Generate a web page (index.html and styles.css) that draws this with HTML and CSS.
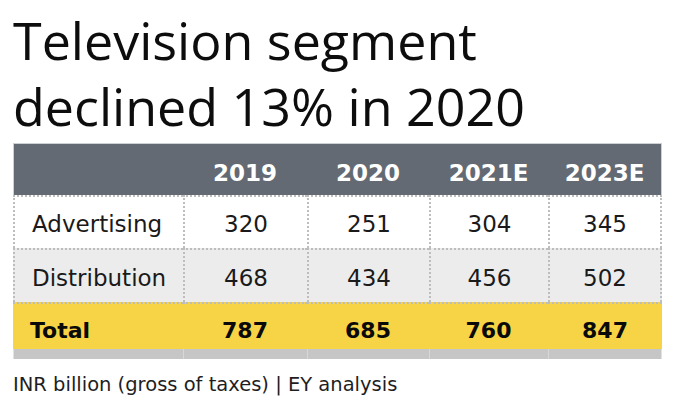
FILE: index.html
```html
<!DOCTYPE html>
<html lang="en">
<head>
<meta charset="utf-8">
<title>Television segment declined 13% in 2020</title>
<link rel="stylesheet" href="styles.css">
</head>
<body>
<div class="chart">
  <h1 class="title">Television segment<br>declined 13% in 2020</h1>
  <table class="data">
    <colgroup>
      <col class="c-label">
      <col class="c-2019">
      <col class="c-2020">
      <col class="c-2021">
      <col class="c-2023">
    </colgroup>
    <thead>
      <tr class="head">
        <th class="first"></th>
        <th>2019</th>
        <th>2020</th>
        <th>2021E</th>
        <th class="last">2023E</th>
      </tr>
    </thead>
    <tbody>
      <tr class="row row-a">
        <td class="label">Advertising</td>
        <td>320</td>
        <td>251</td>
        <td>304</td>
        <td class="last">345</td>
      </tr>
      <tr class="row row-b">
        <td class="label">Distribution</td>
        <td>468</td>
        <td>434</td>
        <td>456</td>
        <td class="last">502</td>
      </tr>
      <tr class="total">
        <td class="label">Total</td>
        <td>787</td>
        <td>685</td>
        <td>760</td>
        <td class="last">847</td>
      </tr>
      <tr class="base">
        <td class="first"></td>
        <td></td>
        <td></td>
        <td></td>
        <td class="last"></td>
      </tr>
    </tbody>
  </table>
  <p class="source">INR billion (gross of taxes) | EY analysis</p>
</div>
</body>
</html>
```
FILE: styles.css
```css
html, body {
  margin: 0;
  padding: 0;
  background: #ffffff;
}

.chart {
  padding: 7px 0 0 13px;
  color: #141414;
}

.title {
  margin: 0 0 4px 0;
  font-family: "Open Sans", "Noto Sans", sans-serif;
  font-weight: 400;
  font-size: 52px;
  line-height: 66px;
  color: #0d0d0d;
  letter-spacing: 0;
}

.data {
  width: 649px;
  table-layout: fixed;
  border-collapse: separate;
  border-spacing: 0;
  font-family: "DejaVu Sans", "Verdana", sans-serif;
  font-size: 23px;
}

.c-label { width: 170px; }
.c-2019 { width: 124px; }
.c-2020 { width: 122px; }
.c-2021 { width: 119px; }
.c-2023 { width: 114px; }

.data th,
.data td {
  padding: 0;
  text-align: center;
  white-space: nowrap;
}

/* header */
.head th {
  background: #646a73;
  color: #ffffff;
  font-weight: 700;
  line-height: 27px;
  padding: 16px 0 8px 0;
  border-top: 1px solid #cdd0d4;
}
.head th.first { border-left: 1px solid #cdd0d4; }
.head th.last { border-right: 1px solid #cdd0d4; }

/* body rows */
.row td {
  line-height: 27px;
  border-top: 2px dotted #bdbdbd;
  border-left: 2px dotted #bdbdbd;
  color: #1a1a1a;
}
.row td.last { border-right: 2px dotted #bdbdbd; }
.row-a td { background: #ffffff; padding: 14px 0 10px 0; }
.row-b td { background: #ececec; padding: 15px 0 10px 0; }

.data td.label {
  text-align: left;
  padding-left: 17px;
}

/* total */
.total td {
  background: #f6d445;
  border-top: 2px dotted #bdbdbd;
  font-weight: 700;
  font-size: 22px;
  line-height: 26px;
  padding: 14px 0 5px 0;
  color: #0a0a0a;
}

/* bottom grey bar */
.base td {
  height: 10px;
  padding: 0;
  background: #c6c6c6;
  border-left: 1px solid #d8d8d8;
  line-height: 0;
  font-size: 0;
}
.base td.first { border-left: 1px solid #e2e2e2; }
.base td.last { border-right: 1px solid #e2e2e2; }

.source {
  margin: 14px 0 0 0;
  font-family: "DejaVu Sans", "Verdana", sans-serif;
  font-size: 19.5px;
  line-height: 24px;
  color: #1e1e1e;
}
```
